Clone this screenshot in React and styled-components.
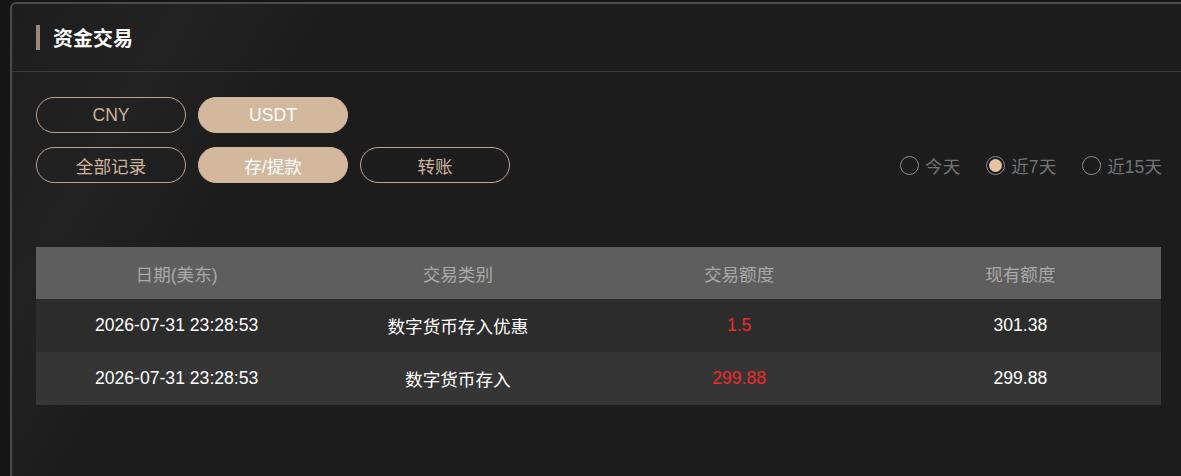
import React from 'react'
import styled, { createGlobalStyle } from 'styled-components'

const GlobalStyle = createGlobalStyle`
  html, body {
    margin: 0;
    padding: 0;
    background: #151515;
    overflow: hidden;
  }
  body {
    font-family: "Liberation Sans", Arial, "Noto Sans CJK SC", sans-serif;
  }
`

const Page = styled.div`
  padding: 2px 0 0 10px;
  height: 474px;
  overflow: hidden;
`

const Panel = styled.section`
  width: 1177px;
  min-height: 520px;
  border: 2px solid #4a4a4a;
  border-radius: 6px;
  background: linear-gradient(120deg, #1d1d1d 0%, #222 12%, #1c1c1c 22%, #1c1c1c 100%);
  box-sizing: border-box;
`

const Header = styled.div`
  height: 67px;
  display: flex;
  align-items: center;
  padding-left: 24px;
  border-bottom: 1px solid #3a3a3a;
`

const TitleBar = styled.span`
  width: 4px;
  height: 25px;
  background: #9c8878;
  margin-right: 13px;
`

const Title = styled.h2`
  margin: 0;
  font-size: 20px;
  font-weight: bold;
  color: #fff;
`

const Body = styled.div`
  padding: 25px 23px 0 24px;
`

const Row = styled.div`
  display: flex;
  align-items: center;
  gap: 12px;
  margin-bottom: ${p => p.$mb || 0}px;
`

const Pill = styled.button`
  width: 150px;
  height: 36px;
  border-radius: 18px;
  border: 1px solid ${p => (p.$active ? '#d4b89e' : '#bfa48c')};
  background: ${p => (p.$active ? '#d4b89e' : 'transparent')};
  color: ${p => (p.$active ? '#fff' : '#cdb39c')};
  font-family: inherit;
  font-size: 17.6px;
  padding: 0;
  cursor: pointer;
`

const Spacer = styled.div`
  flex: 1;
`

const RadioGroup = styled.div`
  display: flex;
  align-items: center;
  gap: 26px;
`

const RadioItem = styled.label`
  display: flex;
  align-items: center;
  gap: 6px;
  color: #727272;
  font-size: 17.6px;
  cursor: pointer;
`

const RadioDot = styled.span`
  width: 19px;
  height: 19px;
  border-radius: 50%;
  border: 1px solid #8a8a8a;
  box-sizing: border-box;
  display: flex;
  align-items: center;
  justify-content: center;
  &::after {
    content: '';
    width: 13px;
    height: 13px;
    border-radius: 50%;
    background: ${p => (p.$checked ? '#e4c4a4' : 'transparent')};
  }
`

const Table = styled.table`
  width: 1125px;
  border-collapse: collapse;
  table-layout: fixed;
  text-align: center;
  font-size: 17.6px;
`

const Th = styled.th`
  height: 52px;
  padding: 0;
  background: #5e5e5e;
  color: #a9a9a9;
  font-weight: normal;
`

const Tr = styled.tr`
  background: ${p => (p.$alt ? '#353535' : '#2c2c2c')};
`

const Td = styled.td`
  height: 53px;
  padding: 0;
  color: ${p => (p.$red ? '#ee2a2a' : '#fff')};
`

const rows = [
  { date: '2026-07-31 23:28:53', type: '数字货币存入优惠', amount: '1.5', balance: '301.38' },
  { date: '2026-07-31 23:28:53', type: '数字货币存入', amount: '299.88', balance: '299.88' },
]

export default function App() {
  return (
    <Page>
      <GlobalStyle />
      <Panel>
        <Header>
          <TitleBar />
          <Title>资金交易</Title>
        </Header>
        <Body>
          <Row $mb={14}>
            <Pill>CNY</Pill>
            <Pill $active>USDT</Pill>
          </Row>
          <Row $mb={64}>
            <Pill>全部记录</Pill>
            <Pill $active>存/提款</Pill>
            <Pill>转账</Pill>
            <Spacer />
            <RadioGroup>
              <RadioItem><RadioDot />今天</RadioItem>
              <RadioItem><RadioDot $checked />近7天</RadioItem>
              <RadioItem><RadioDot />近15天</RadioItem>
            </RadioGroup>
          </Row>
          <Table>
            <thead>
              <tr>
                <Th>日期(美东)</Th>
                <Th>交易类别</Th>
                <Th>交易额度</Th>
                <Th>现有额度</Th>
              </tr>
            </thead>
            <tbody>
              {rows.map((r, i) => (
                <Tr key={i} $alt={i % 2 === 1}>
                  <Td>{r.date}</Td>
                  <Td>{r.type}</Td>
                  <Td $red>{r.amount}</Td>
                  <Td>{r.balance}</Td>
                </Tr>
              ))}
            </tbody>
          </Table>
        </Body>
      </Panel>
    </Page>
  )
}
